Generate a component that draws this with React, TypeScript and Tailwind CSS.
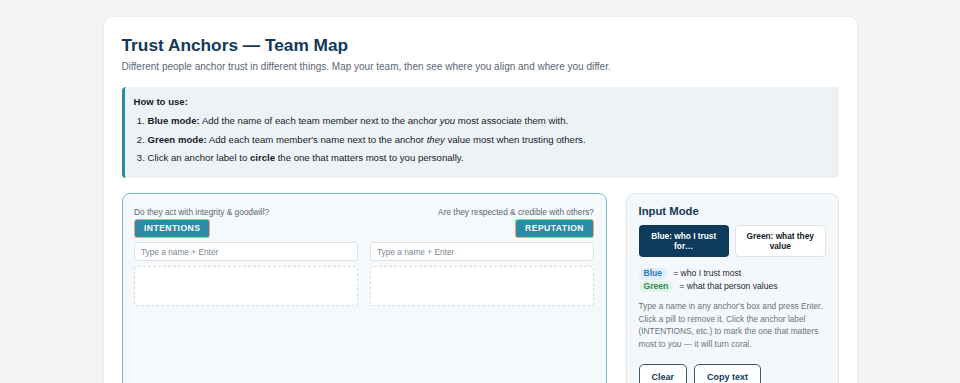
import React from 'react';

const FONT = { fontFamily: '"Liberation Sans", Arial, sans-serif' };

interface Anchor {
  label: string;
  question: string;
  align: 'left' | 'right';
}

const ANCHORS: Anchor[] = [
  { label: 'Intentions', question: 'Do they act with integrity & goodwill?', align: 'left' },
  { label: 'Reputation', question: 'Are they respected & credible with others?', align: 'right' },
];

function AnchorBox({ anchor }: { anchor: Anchor }) {
  const right = anchor.align === 'right';
  return (
    <div className={'flex flex-col ' + (right ? 'items-end' : 'items-start')}>
      <div className="text-[8.3px] leading-[11px] text-[#5b6673]">{anchor.question}</div>
      <button className="mt-[1px] h-[19px] rounded-[3px] border-[1.5px] border-[#f0a38c] bg-[#2b8aa6] px-[9px] text-[8.6px] font-bold uppercase tracking-[0.05em] text-white">
        {anchor.label}
      </button>
      <input
        className="mt-[4px] h-[19px] w-full rounded-[3px] border border-[#dde3e8] bg-white px-[6px] text-[8.3px] text-[#1f2937] placeholder:text-[#7b8590] focus:outline-none"
        placeholder="Type a name + Enter"
      />
      <div className="mt-[5px] h-[40px] w-full rounded-[4px] border border-dashed border-[#d6dde3] bg-white" />
    </div>
  );
}

export default function App() {
  return (
    <div className="min-h-screen bg-[#f3f4f6] pt-4" style={FONT}>
      <div className="mx-auto w-[755px] rounded-[10px] border border-[#eceef1] bg-white px-[18px] pb-[30px] pt-[18px] shadow-[0_1px_3px_rgba(0,0,0,0.05)]">
        <h1 className="text-[17.3px] font-bold leading-[20px] text-[#12395b]">
          Trust Anchors — Team Map
        </h1>
        <p className="mt-[4px] text-[10px] leading-[15px] text-[#5b6673]">
          Different people anchor trust in different things. Map your team, then see where you align and
          where you differ.
        </p>

        <div className="mt-[13px] rounded-[4px] border-l-[3px] border-[#2b8aa6] bg-[#edf2f5] pb-[12px] pl-[9px] pr-3 pt-[7px] text-[9.6px] leading-[16px] text-[#1a202c]">
          <div className="font-bold">How to use:</div>
          <ol className="mt-[3px] flex list-decimal flex-col gap-[2.5px] pl-[14px]">
            <li>
              <b>Blue mode:</b> Add the name of each team member next to the anchor <i>you</i> most
              associate them with.
            </li>
            <li>
              <b>Green mode:</b> Add each team member's name next to the anchor <i>they</i> value most
              when trusting others.
            </li>
            <li>
              Click an anchor label to <b>circle</b> the one that matters most to you personally.
            </li>
          </ol>
        </div>

        <div className="mt-[15px] grid grid-cols-[485px_213px] gap-[19px]">
          <div className="min-h-[320px] rounded-[8px] border-[1.5px] border-[#74bdd0] bg-[#f5f9fb] px-[11.5px] pt-[13px]">
            <div className="grid grid-cols-2 gap-[12px]">
              {ANCHORS.map((a) => (
                <AnchorBox key={a.label} anchor={a} />
              ))}
            </div>
          </div>

          <div className="rounded-[8px] border border-[#e1e7ec] bg-[#f5f8fa] px-[12px] pb-4 pt-[10px]">
            <div className="text-[11.3px] font-bold leading-[14px] text-[#12395b]">Input Mode</div>
            <div className="mt-[7px] grid grid-cols-2 gap-[6px]">
              <button className="h-[32px] rounded-[4px] bg-[#0e3a5c] px-2 text-[8.3px] font-bold leading-[10px] text-white">
                Blue: who I trust
                <br />
                for…
              </button>
              <button className="h-[32px] rounded-[4px] border border-[#dfe4e9] bg-white px-2 text-[8.3px] font-bold leading-[10px] text-[#111827]">
                Green: what they value
              </button>
            </div>

            <div className="mt-[11px] flex flex-col gap-[1px] text-[8.6px] leading-[11.5px] text-[#1f2937]">
              <div className="flex items-center gap-[6px]">
                <span className="rounded-full bg-[#e0eefa] px-[5px] font-semibold text-[#2f78b7]">Blue</span>
                <span>= who I trust most</span>
              </div>
              <div className="flex items-center gap-[6px]">
                <span className="rounded-full bg-[#e2f3e8] px-[5px] font-semibold text-[#2e8a55]">Green</span>
                <span>= what that person values</span>
              </div>
            </div>

            <p className="mt-[8px] text-[8.3px] leading-[12.6px] text-[#6b7280]">
              Type a name in any anchor's box and press Enter. Click a pill to remove it. Click the anchor
              label (INTENTIONS, etc.) to mark the one that matters most to <i>you</i> — it will turn coral.
            </p>

            <div className="mt-[14px] flex gap-[7px]">
              <button className="h-[27px] rounded-[5px] border-[1.5px] border-[#3d5a73] bg-white px-[12px] text-[9px] font-bold text-[#12395b]">
                Clear
              </button>
              <button className="h-[27px] rounded-[5px] border-[1.5px] border-[#3d5a73] bg-white px-[12px] text-[9px] font-bold text-[#12395b]">
                Copy text
              </button>
            </div>
          </div>
        </div>
      </div>
    </div>
  );
}
